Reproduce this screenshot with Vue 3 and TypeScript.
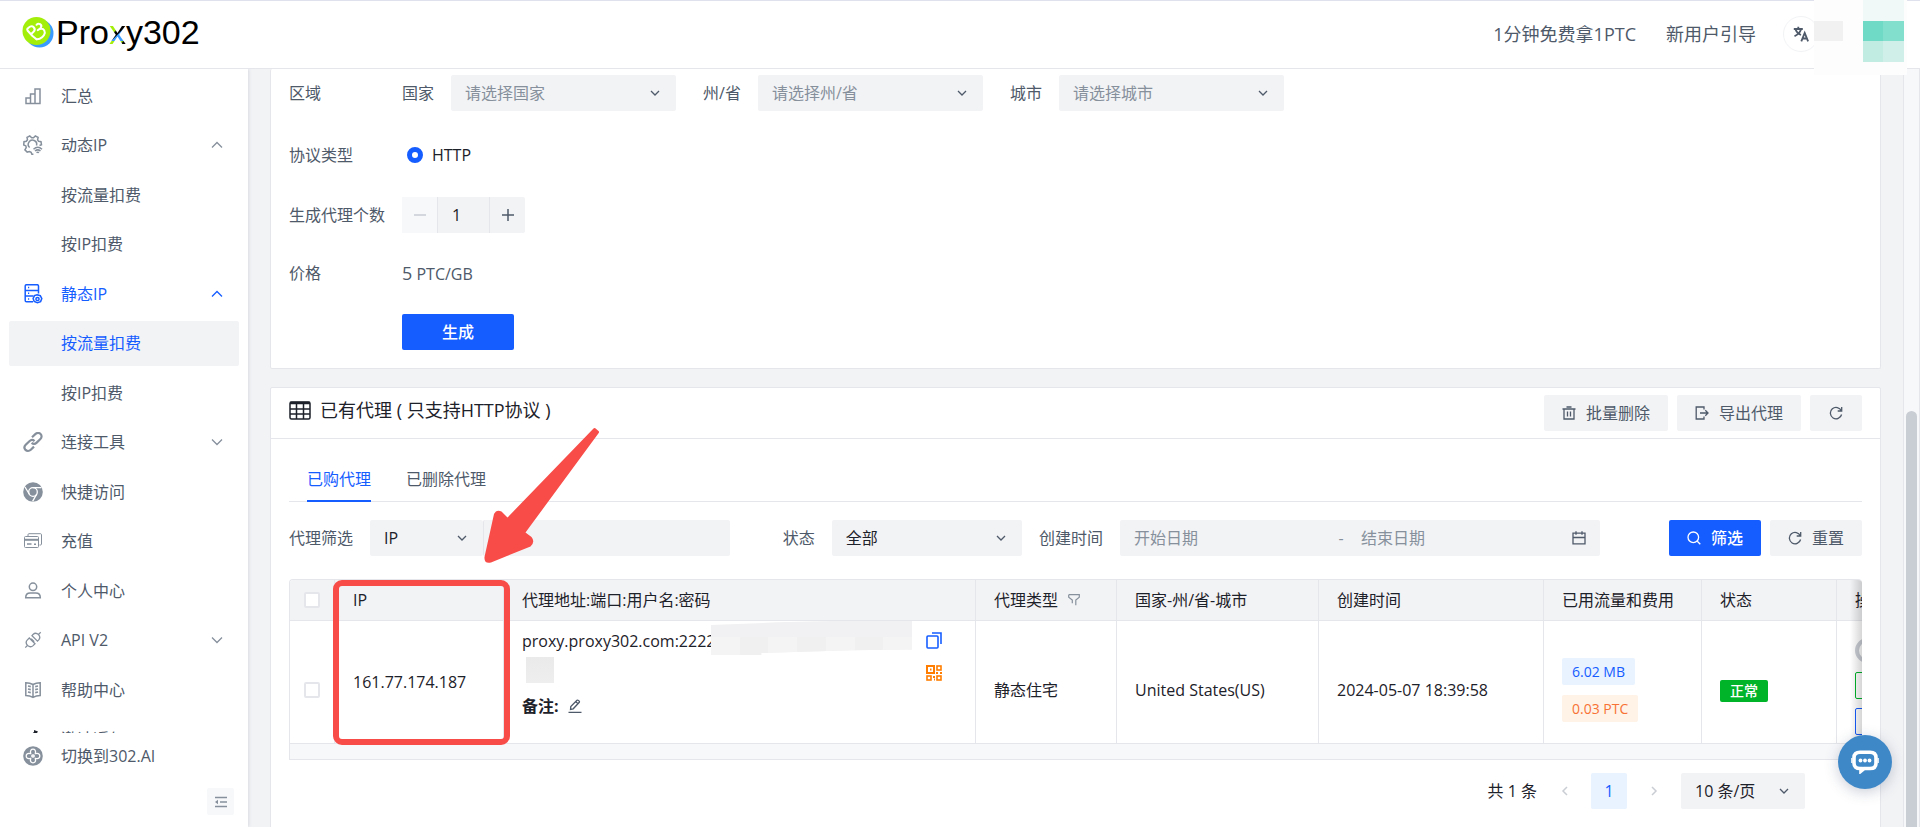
<script setup lang="ts">
import { ref } from 'vue'

interface MenuItem {
  label: string
  icon?: string
  open?: boolean
  arrow?: boolean
  state?: 'parent' | 'active'
}

const icons: Record<string, string> = {
  chart: '<path d="M3 17.5V12h4.5v5.5M7.500 17.500V8H12v9.500M12 17.500V3h5v14.500M2.300 17.500h15.400"/>',
  gearWifi:
    '<path d="M16.500 10.500l2-.8-.5-3-2.400-.4-1-1.500.5-2.400-2.800-1.400L10.500 2.700H8.700L6.800 1 4 2.400l.5 2.300-1.200 1.600-2.300.4-.3 3.200 2.200 1 .3 1.800-1.300 2.100 2.300 2.300 2.300-.6 1.600.8.8 2h1.500"/><path d="M6.700 12.500a4.200 4.200 0 1 1 6.800-2"/><path d="M10.500 14.300c2.600-2.400 5.900-2.400 8.500 0M12 16c1.800-1.500 3.700-1.500 5.500 0M13.500 17.700c.8-.6 1.700-.6 2.500 0"/>',
  server:
    '<path d="M10 17.800H3.500c-.8 0-1.300-.5-1.300-1.300V2c0-.8.5-1.300 1.300-1.300h10.700c.8 0 1.300.5 1.300 1.300v7.500M2.200 6.400h13.300M2.200 12h8.300M5 3.600h1.200M5 9.200h1.200M5 15h1.200"/><path d="M14 10.800l3.300.9 1.500 2.900-1.200 3-3.200 1.200-3.200-1.300-1.100-3 1.400-2.900z"/><circle cx="14.500" cy="15" r="1.600"/>',
  link: '<g stroke-width="2.200"><path d="M9 5.200l3.300-3.100c1.700-1.600 4-1.500 5.300-.1 1.300 1.300 1.300 3.500-.2 5l-3.700 3.600c-1.500 1.500-3.700 1.400-5.100.2"/><path d="M11 14.600l-3.200 3.100c-1.700 1.600-4 1.500-5.300.2-1.300-1.400-1.300-3.600.2-5.100l3.700-3.600c1.500-1.400 3.700-1.400 5.100-.1"/></g>',
  chrome:
    '<circle cx="10" cy="10" r="9.800" fill="currentColor" stroke="none"/><circle cx="10" cy="10" r="4.300" stroke="#fff" stroke-width="1.300"/><g stroke="#fff" stroke-width="1.300"><path d="M10 5.700h8.500M6.200 12L2 5M13.700 12.200L9.600 19.300"/></g>',
  card: '<path d="M5 5V3.700c0-.6.400-1 1-1h11.500c.6 0 1 .4 1 1V13c0 .6-.4 1-1 1h-1" stroke-width="1"/><rect x="1.500" y="5.500" width="14" height="11" rx="1" stroke-width="1"/><path d="M1.500 8.800h14" stroke-width="2"/><path d="M4 13h4.500M11 13.300h2" stroke-width="1.400"/>',
  user: '<circle cx="10" cy="5.800" r="3.700"/><path d="M2.700 16.800c0-3 1.600-4.700 4.500-4.700h5.600c2.900 0 4.500 1.700 4.500 4.700z"/>',
  plug: '<path d="M2.300 17.600l2.300-2.300M17.700 2.300l-2.300 2.300M8.200 8.800l3 3M4.500 15.400c-1.700-1.900-1.700-3.900-.1-5.500l1.900-1.900 5.700 5.700-1.900 1.900c-1.700 1.600-4 1.500-5.600-.2zM15.500 4.600c-1.800-1.600-3.800-1.700-5.500-.1L9 5.700l5.500 5.400 1-1c1.600-1.700 1.600-3.800 0-5.500z" stroke-width="1.300"/>',
  book: '<path d="M10 4.500C7.600 3 5.200 2.700 2.800 2.700v12.800c2.600 0 4.900.5 7.200 1.800 2.300-1.300 4.600-1.800 7.200-1.800V2.700c-2.400 0-4.800.3-7.200 1.800zM10 4.500v12.800"/><path d="M5 6l2.800.6M5 9l2.800.6M5 12l2.800.6M15 6l-2.800.6M15 9l-2.800.6M15 12l-2.800.6" stroke-width="1.600"/>',
  flame:
    '<path d="M11 1l4 1.500-1 1.500 2 2-1 3h-5c-1-3-1-5 1-6z" fill="#1d2129" stroke="none"/>',
  switch:
    '<circle cx="10" cy="10" r="9.800" fill="currentColor" stroke="none"/><path d="M7.700 7.700c-3.700-1-4.500.9-4.500 2.300s.8 3.300 4.500 2.300c-1 3.700.9 4.500 2.300 4.500s3.300-.8 2.300-4.500c3.700 1 4.500-.9 4.500-2.300s-.8-3.300-4.500-2.300c1-3.700-.9-4.500-2.300-4.500s-3.300.8-2.300 4.500zM10 8v4M8 10h4" stroke="#fff" stroke-width="1.300"/>',
}

const menu: MenuItem[] = [
  { label: '汇总', icon: 'chart' },
  { label: '动态IP', icon: 'gearWifi', arrow: true, open: true },
  { label: '按流量扣费' },
  { label: '按IP扣费' },
  { label: '静态IP', icon: 'server', arrow: true, open: true, state: 'parent' },
  { label: '按流量扣费', state: 'active' },
  { label: '按IP扣费' },
  { label: '连接工具', icon: 'link', arrow: true },
  { label: '快捷访问', icon: 'chrome' },
  { label: '充值', icon: 'card' },
  { label: '个人中心', icon: 'user' },
  { label: 'API V2', icon: 'plug', arrow: true },
  { label: '帮助中心', icon: 'book' },
  { label: '邀请返佣', icon: 'flame' },
]

const regions = [
  { id: 'country', label: '国家', hint: '请选择国家' },
  { id: 'state', label: '州/省', hint: '请选择州/省' },
  { id: 'city', label: '城市', hint: '请选择城市' },
]

const quantity = ref('1')
const protocol = ref('HTTP')
</script>

<template>
  <div class="app">
    <header class="topbar">
      <a class="logo" href="#" aria-label="Proxy302">
        <svg class="logo-mark" width="32" height="32" viewBox="0 0 32 32">
          <circle cx="17.500" cy="17.500" r="14" fill="#3a9bff" />
          <circle cx="14.500" cy="15" r="14" fill="#a4ee0c" />
          <g fill="none" stroke="#fff" stroke-width="2" stroke-linecap="round" stroke-linejoin="round">
            <path d="M10.500 20L5.500 14.500c-.8-1 0-2 1-2.800 1.500-1.300 3.700-2 5.200-.5 1.500 1.500 1 3.500-.4 4.900L9.500 17.800M10.500 20l4 3.200" />
            <path d="M14.500 8.800c2-2.300 6.200-.3 4.300 3-.7 1.100-1.900 1.900-3.100 2.400 2.300-1.600 5.300-2 6.600.2 1.700 3-1.200 7-4.700 8.300-1.200.4-2.300.4-3.100.5" />
          </g>
        </svg>
        <span class="logo-text">Pro<span class="logo-x">x</span>y302</span>
      </a>
      <nav class="toplinks">
        <a href="#">1分钟免费拿1PTC</a>
        <a href="#">新用户引导</a>
        <button class="lang" type="button" aria-label="语言">
          <svg width="16" height="16" viewBox="0 0 16 16" fill="none" stroke="currentColor" stroke-width="1.800">
            <path d="M.8 3h9M5.300.8V3M2.500 3.500c1 2.500 3 4.500 5.500 5.500M8 3.500C7 6.500 4.500 8.800 1.500 10.300" />
            <path d="M8.300 15.300l3.400-8.500 3.400 8.500M9.400 12.500h4.600" />
          </svg>
        </button>
      </nav>
      <div class="mask-account" aria-hidden="true">
        <i class="cell-gray"></i><i class="cell-pale"></i><i class="cell-teal"></i><i class="cell-mint"></i>
      </div>
    </header>

    <aside class="sidebar">
      <ul class="menu">
        <li v-for="(item, i) in menu" :key="i">
          <a href="#" class="menu-item" :class="item.state">
            <svg
              v-if="item.icon"
              class="menu-icon"
              width="20"
              height="20"
              viewBox="0 0 20 20"
              fill="none"
              stroke="currentColor"
              stroke-width="1.500"
              v-html="icons[item.icon]"
            ></svg>
            <span class="menu-label">{{ item.label }}</span>
            <svg v-if="item.arrow" class="menu-arrow" width="12" height="8" viewBox="0 0 12 8" fill="none" stroke="currentColor" stroke-width="1.300">
              <path :d="item.open ? 'M1 6.500L6 1.500L11 6.500' : 'M1 1.500L6 6.500L11 1.500'" />
            </svg>
          </a>
        </li>
      </ul>
      <a href="#" class="menu-item bottom-item">
        <svg class="menu-icon" width="20" height="20" viewBox="0 0 20 20" fill="none" v-html="icons.switch"></svg>
        <span class="menu-label">切换到302.AI</span>
      </a>
      <button class="collapse" type="button" aria-label="收起菜单">
        <svg width="14" height="12" viewBox="0 0 14 12" fill="none" stroke="currentColor" stroke-width="1.300">
          <path d="M1 1.500h12M6 6h7M1 10.500h12" /><path d="M4 3.800v4.400L1 6z" fill="currentColor" stroke="none" />
        </svg>
      </button>
    </aside>

    <main class="content">
      <section class="card form-card">
        <div class="form-row row-region">
          <span class="form-label">区域</span>
          <div class="regions">
            <div v-for="r in regions" :key="r.id" class="region">
              <label :for="r.id">{{ r.label }}</label>
              <div class="select region-select">
                <select :id="r.id" class="hint"><option>{{ r.hint }}</option></select>
                <svg width="10" height="7" viewBox="0 0 10 7"><path d="M1 1l4 4 4-4" /></svg>
              </div>
            </div>
          </div>
        </div>
        <div class="form-row row-protocol">
          <span class="form-label">协议类型</span>
          <label class="radio"><input v-model="protocol" type="radio" name="protocol" value="HTTP" /><span>HTTP</span></label>
        </div>
        <div class="form-row row-count">
          <label class="form-label" for="qty">生成代理个数</label>
          <div class="stepper">
            <button type="button" disabled aria-label="减少"><svg width="14" height="14" viewBox="0 0 14 14"><path d="M1 7h12" /></svg></button>
            <input id="qty" v-model="quantity" type="text" />
            <button type="button" aria-label="增加"><svg width="14" height="14" viewBox="0 0 14 14"><path d="M1 7h12M7 1v12" /></svg></button>
          </div>
        </div>
        <div class="form-row row-price">
          <span class="form-label">价格</span>
          <span class="price"><b>5</b> PTC/GB</span>
        </div>
        <div class="form-row row-submit">
          <span class="form-label"></span>
          <button class="primary generate" type="button">生成</button>
        </div>
      </section>

      <section class="card list-card">
        <div class="card-head">
          <svg width="22" height="19" viewBox="0 0 22 19" fill="none" stroke="#1d2129" stroke-width="1.500">
            <rect x="1" y="1" width="20" height="17" rx="1.500" /><path d="M1 2h20" stroke-width="2.500" /><path d="M1 8h20M1 13h20M7.500 1v17M14.500 1v17" />
          </svg>
          <h2>已有代理 ( 只支持HTTP协议 )</h2>
          <div class="head-actions">
            <button class="soft" type="button">
              <svg class="ico" viewBox="0 0 14 14"><path d="M.5 3h13M2 3v10h10V3M4.500 1h5M5.500 5.500v5M8.500 5.500v5" /></svg>批量删除
            </button>
            <button class="soft" type="button">
              <svg class="ico" viewBox="0 0 14 14"><path d="M9 3.500V1H1.200v12H9v-2.500M5 7h8M10.300 4.300L13 7l-2.700 2.700" /></svg>导出代理
            </button>
            <button class="soft only-icon" type="button" aria-label="刷新">
              <svg class="ico" viewBox="0 0 14 14"><path d="M12.300 4.800A5.700 5.700 0 1 0 12.600 8.500M12.700 1v4H8.700" /></svg>
            </button>
          </div>
        </div>

        <div class="tabs" role="tablist">
          <button class="tab on" type="button" role="tab" aria-selected="true">已购代理</button>
          <button class="tab" type="button" role="tab" aria-selected="false">已删除代理</button>
        </div>

        <div class="filters">
          <label for="kind">代理筛选</label>
          <div class="combo">
            <div class="select">
              <select id="kind"><option>IP</option></select>
              <svg width="10" height="7" viewBox="0 0 10 7"><path d="M1 1l4 4 4-4" /></svg>
            </div>
            <input type="text" aria-label="代理筛选内容" />
          </div>
          <label for="status" class="status-label">状态</label>
          <div class="select status-select">
            <select id="status"><option>全部</option></select>
            <svg width="10" height="7" viewBox="0 0 10 7"><path d="M1 1l4 4 4-4" /></svg>
          </div>
          <label for="start">创建时间</label>
          <div class="range">
            <input id="start" type="text" placeholder="开始日期" />
            <span>-</span>
            <input type="text" placeholder="结束日期" aria-label="结束日期" class="range-end" />
            <svg class="ico" viewBox="0 0 14 14"><path d="M1 2.200h12v10.600H1zM1 6.500h12M4 .3v3.400M10 .3v3.400" /></svg>
          </div>
          <div class="filter-actions">
            <button class="primary" type="button">
              <svg class="ico" viewBox="0 0 14 14"><circle cx="6.300" cy="6.300" r="5.300" /><path d="M10.300 10.300L13.300 13.300" /></svg>筛选
            </button>
            <button class="soft" type="button">
              <svg class="ico" viewBox="0 0 14 14"><path d="M12.300 4.800A5.700 5.700 0 1 0 12.600 8.500M12.700 1v4H8.700" /></svg>重置
            </button>
          </div>
        </div>

        <div class="table-zone">
          <div class="table-wrap">
            <table>
              <colgroup>
                <col class="c-check" /><col class="c-ip" /><col /><col class="c-type" /><col class="c-region" /><col class="c-time" /><col class="c-usage" /><col class="c-status" /><col class="c-ops" />
              </colgroup>
              <thead>
                <tr>
                  <th class="check"><input type="checkbox" aria-label="全选" /></th>
                  <th>IP</th>
                  <th>代理地址:端口:用户名:密码</th>
                  <th>
                    <span class="th-filter">代理类型
                      <svg width="12" height="12" viewBox="0 0 12 12" fill="none" stroke="#86909c" stroke-width="1.200"><path d="M.7.700h10.600v2.600L7.800 6v5.300M.7.700v2.600L4.300 6v3.300" /></svg>
                    </span>
                  </th>
                  <th>国家-州/省-城市</th>
                  <th>创建时间</th>
                  <th>已用流量和费用</th>
                  <th>状态</th>
                  <th>操作</th>
                </tr>
              </thead>
              <tbody>
                <tr>
                  <td class="check"><input type="checkbox" aria-label="选择 161.77.174.187" /></td>
                  <td class="ip">161.77.174.187</td>
                  <td class="addr-cell">
                    <div class="addr">
                      <div class="addr-text">
                        <div>proxy.proxy302.com:2222</div>
                        <div class="note">
                          <strong>备注:</strong>
                          <button type="button" aria-label="编辑备注">
                            <svg class="ico" viewBox="0 0 14 14"><path d="M.5 13.300h13M2.500 10.500l.3-3L9 1.300c.8-.8 3 1 2.300 2L5.200 9.800zM7.800 2.800l2.300 2" /></svg>
                          </button>
                        </div>
                      </div>
                      <div class="addr-tools">
                        <button type="button" aria-label="复制">
                          <svg width="16" height="17" viewBox="0 0 16 17" fill="none" stroke="#165dff" stroke-width="1.600"><rect x="1" y="4" width="11" height="12" rx="1" /><path d="M6 1h9v11" /></svg>
                        </button>
                        <button type="button" aria-label="二维码">
                          <svg width="16" height="16" viewBox="0 0 16 16" fill="none" stroke="#ff7d00" stroke-width="2">
                            <rect x="1" y="1" width="7" height="7" /><path d="M4 4.500h1.500" /><rect x="11" y="1" width="4" height="4" stroke-width="1.600" /><rect x="1" y="11" width="4" height="4" stroke-width="1.600" /><rect x="11" y="11" width="4" height="4" stroke-width="1.600" /><path d="M7 12h2M8 14.500h1M10 8h2M14 8h2" />
                          </svg>
                        </button>
                      </div>
                    </div>
                    <div class="mask-credential" aria-hidden="true"><i></i><i></i><i></i><i></i><i></i><i></i><i></i></div>
                    <div class="mask-tail" aria-hidden="true"></div>
                  </td>
                  <td>静态住宅</td>
                  <td>United States(US)</td>
                  <td>2024-05-07 18:39:58</td>
                  <td>
                    <div class="usage"><span class="tag blue">6.02 MB</span><span class="tag orange">0.03 PTC</span></div>
                  </td>
                  <td><span class="badge">正常</span></td>
                  <td class="ops-cell">
                    <div class="ops">
                      <button class="toggle" type="button" role="switch" aria-checked="false" aria-label="启用"></button>
                      <button class="op green" type="button" aria-label="续费"></button>
                      <button class="op indigo" type="button" aria-label="详情"></button>
                    </div>
                  </td>
                </tr>
              </tbody>
            </table>
            <div class="track"></div>
          </div>
          <div class="highlight" aria-hidden="true"></div>
          <svg class="pointer" width="120" height="140" viewBox="0 0 120 140" aria-hidden="true">
            <path d="M109.500 3.500Q110.300 2.500 111.300 3.300L114.500 6Q115.500 7 114.700 8L41.500 107.500L47.500 112Q51.500 117 46.500 121.500L7 137.500Q0 139 .5 132L10 89Q12.500 84 17.500 86.500L23.500 92.500Z" fill="#f74c48" />
          </svg>
        </div>

        <div class="pager">
          <span class="total">共 1 条</span>
          <button type="button" aria-label="上一页" disabled><svg width="7" height="10" viewBox="0 0 7 10"><path d="M6 1L2 5l4 4" /></svg></button>
          <button type="button" class="current">1</button>
          <button type="button" aria-label="下一页" disabled><svg width="7" height="10" viewBox="0 0 7 10"><path d="M1 1l4 4-4 4" /></svg></button>
          <div class="select page-size">
            <select aria-label="每页条数"><option>10 条/页</option></select>
            <svg width="10" height="7" viewBox="0 0 10 7"><path d="M1 1l4 4 4-4" /></svg>
          </div>
        </div>
      </section>
    </main>

    <div class="scrollbar" aria-hidden="true"><div class="thumb"></div></div>

    <button class="chat" type="button" aria-label="在线客服">
      <svg width="28" height="24" viewBox="0 0 28 24" fill="none" stroke="#fff">
        <path d="M9 2.200h10c4 0 6 2 6 5.500v5.500c0 3.500-2 5.300-6 5.300h-6l-3 2.500v-2.500H9c-4 0-6-2-6-5.300V7.700c0-3.500 2-5.500 6-5.500z" stroke-width="3.600" />
        <path d="M.8 8v5M27.200 8v5" stroke-width="1.200" />
        <g fill="#fff" stroke="none"><circle cx="9.500" cy="10.500" r="1.900" /><circle cx="14" cy="10.500" r="1.900" /><circle cx="18.500" cy="10.500" r="1.900" /></g>
      </svg>
    </button>
  </div>
</template>

<style>
body {
  margin: 0;
  overflow: hidden;
}
</style>

<style scoped>
* {
  box-sizing: border-box;
}
.app {
  display: grid;
  grid-template: 69px 1fr / 248px 1fr 17px;
  height: 100vh;
  overflow: hidden;
  background: #f2f3f5;
  color: #4e5969;
  font: 16px/24px 'Open Sans', 'Noto Sans CJK SC', sans-serif;
}
a {
  color: inherit;
  text-decoration: none;
}
button,
input,
select {
  margin: 0;
  padding: 0;
  border: 0;
  border-radius: 0;
  outline: 0;
  background: none;
  color: inherit;
  font: inherit;
}
svg {
  display: block;
  flex: none;
}
.ico {
  width: 14px;
  height: 14px;
  fill: none;
  stroke: currentColor;
  stroke-width: 1.3;
}

/* top bar */
.topbar {
  position: relative;
  grid-column: 1 / -1;
  display: flex;
  align-items: center;
  justify-content: space-between;
  padding: 0 101px 2px 22px;
  border-top: 1px solid #dfe1ec;
  border-bottom: 1px solid #e5e6eb;
  background: #fff;
}
.logo {
  display: flex;
  align-items: center;
  gap: 2px;
  padding-bottom: 4px;
  color: #000;
}
.logo-text {
  font: 34px/40px 'Liberation Sans', Arial, sans-serif;
}
.logo-x {
  background: linear-gradient(135deg, #a4ee0c 38%, #000 44%, #000 56%, #3a9bff 60%) center / 100% 18px;
  background-clip: text;
  color: transparent;
}
.toplinks {
  display: flex;
  align-items: center;
  gap: 30px;
  font-size: 18px;
}
.lang {
  display: grid;
  place-items: center;
  width: 36px;
  height: 36px;
  margin-left: -3px;
  border: 1px solid #f2f3f5;
  border-radius: 50%;
}
.mask-account {
  position: absolute;
  top: -1px;
  right: 13px;
  z-index: 2;
  display: grid;
  grid-template: 21px 20px 21px 13px / 29px 20px 41px 3px;
  background: #fdfdfd;
}
.cell-gray {
  grid-area: 2 / 1;
  background: #f1f1f1;
}
.cell-pale {
  grid-area: 1 / 3;
  background: #f0f8f8;
}
.cell-teal {
  grid-area: 2 / 3;
  background: linear-gradient(90deg, #6fdac5 50%, #82dfcd 50%);
}
.cell-mint {
  grid-area: 3 / 3;
  background: linear-gradient(90deg, #c0ece2 50%, #cfefe8 50%);
}

/* sidebar */
.sidebar {
  display: flex;
  flex-direction: column;
  min-height: 0;
  padding: 5px 9px 12px;
  background: #fff;
  box-shadow: 1px 0 3px #d8dbe2;
}
.menu {
  flex: 1;
  margin: 0;
  padding: 0;
  overflow: hidden;
  list-style: none;
}
.menu li {
  margin-bottom: 4px;
}
.menu li:nth-child(even) {
  margin-bottom: 5px;
}
.menu-item {
  display: flex;
  align-items: center;
  height: 45px;
  padding: 0 16px 2px 52px;
  border-radius: 2px;
}
.menu-icon {
  width: 20px;
  margin-left: -38px;
  margin-right: 18px;
  color: #86909c;
}
.menu-label {
  flex: 1;
}
.menu-arrow {
  color: #86909c;
}
.parent,
.parent svg,
.active {
  color: #165dff;
}
.active {
  background: #f2f3f5;
}
.bottom-item {
  height: 46px;
  padding-bottom: 0;
}
.collapse {
  display: grid;
  place-items: center;
  align-self: flex-end;
  width: 27px;
  height: 27px;
  margin: 9px 5px 0 0;
  border-radius: 2px;
  background: #f7f8fa;
  color: #86909c;
}

/* content */
.content {
  display: flex;
  flex-direction: column;
  gap: 18px;
  min-width: 0;
  min-height: 0;
  padding: 0 22px;
  overflow: hidden;
}
.card {
  flex: none;
  border: 1px solid #e5e6eb;
  border-radius: 2px;
  background: #fff;
}
.form-card {
  padding: 6px 18px 18px;
  border-top: 0;
}
.form-row {
  display: flex;
  align-items: center;
  height: 36px;
}
.row-protocol {
  margin-top: 26px;
}
.row-count {
  margin-top: 24px;
}
.row-price {
  margin-top: 22px;
}
.row-submit {
  margin-top: 23px;
}
.form-label {
  width: 113px;
}
.regions,
.region {
  display: flex;
  align-items: center;
}
.regions {
  gap: 27px;
}
.region {
  gap: 17px;
}
.region-select {
  width: 225px;
}
.select {
  position: relative;
  display: flex;
  align-items: center;
  height: 36px;
  border-radius: 2px;
  background: #f2f3f5;
  color: #1d2129;
}
.select select {
  width: 100%;
  height: 36px;
  padding: 0 36px 0 14px;
  appearance: none;
}
.select .hint {
  color: #86909c;
}
.select svg {
  position: absolute;
  right: 16px;
  fill: none;
  stroke: #4e5969;
  stroke-width: 1.3;
  pointer-events: none;
}
.radio {
  display: flex;
  align-items: center;
  gap: 9px;
  padding-left: 5px;
  color: #1d2129;
}
.radio input {
  width: 16px;
  height: 16px;
  border: 5px solid #165dff;
  border-radius: 50%;
  background: #fff;
  appearance: none;
}
.stepper {
  display: flex;
  border-radius: 2px;
  background: #f2f3f5;
}
.stepper button {
  display: grid;
  place-items: center;
  width: 35px;
  height: 36px;
}
.stepper button:disabled {
  background: #f7f8fa;
  color: #c9cdd4;
}
.stepper svg {
  stroke: currentColor;
  stroke-width: 1.5;
}
.stepper input {
  width: 53px;
  height: 36px;
  padding-left: 14px;
  border: solid #e5e6eb;
  border-width: 0 1px;
  color: #1d2129;
}
.price b {
  font-size: 18px;
  font-weight: 400;
}
.primary,
.soft {
  display: flex;
  align-items: center;
  justify-content: center;
  gap: 10px;
  height: 36px;
  padding: 0 18px;
  border-radius: 2px;
  white-space: nowrap;
}
.primary {
  background: #165dff;
  color: #fff;
  font-weight: 500;
}
.soft {
  background: #f2f3f5;
}
.generate {
  width: 112px;
}

.list-card {
  padding-bottom: 60px;
}
.card-head {
  display: flex;
  align-items: center;
  gap: 9px;
  height: 51px;
  padding: 0 18px;
  border-bottom: 1px solid #e5e6eb;
  color: #1d2129;
}
.card-head > svg {
  margin-bottom: 6px;
}
h2 {
  flex: 1;
  margin: 0 0 6px;
  font-size: 18px;
  font-weight: 400;
}
.head-actions {
  display: flex;
  gap: 9px;
  color: #4e5969;
}
.only-icon {
  width: 52px;
}
.tabs {
  display: flex;
  gap: 35px;
  margin: 18px 18px 0;
  padding: 0 18px;
  border-bottom: 1px solid #e5e6eb;
}
.tab {
  height: 45px;
  margin-bottom: -1px;
  border-bottom: 2px solid transparent;
}
.tab.on {
  border-color: #165dff;
  color: #165dff;
}
.filters {
  display: flex;
  align-items: center;
  gap: 17px;
  margin: 18px 18px 23px;
}
.filters label {
  flex: none;
}
.combo {
  display: flex;
  flex: 359 1 0;
}
.combo .select {
  width: 113px;
}
.combo input {
  flex: 1;
  min-width: 0;
  height: 36px;
  padding: 0 14px;
  border-left: 1px solid #e5e6eb;
  border-radius: 2px;
  background: #f2f3f5;
}
.status-label {
  margin-left: 36px;
}
.status-select {
  flex: 190 1 0;
}
.range {
  display: flex;
  flex: 451 1 28px;
  align-items: center;
  min-width: 0;
  height: 36px;
  padding: 0 14px;
  border-radius: 2px;
  background: #f2f3f5;
  color: #86909c;
}
.range input {
  flex: 1;
  min-width: 0;
}
.range span {
  width: 16px;
  text-align: center;
}
.range .range-end {
  padding-left: 12px;
}
.range .ico {
  margin-left: 12px;
  color: #4e5969;
}
.range ::placeholder {
  color: #86909c;
  opacity: 1;
}
.filter-actions {
  display: flex;
  gap: 9px;
  margin-left: 52px;
}

/* table */
.table-zone {
  position: relative;
  margin: 0 18px;
}
.table-wrap {
  position: relative;
  overflow: hidden;
  border: 1px solid #e5e6eb;
  border-right: 0;
  border-radius: 4px 4px 0 0;
}
.table-wrap::after {
  content: '';
  position: absolute;
  top: 0;
  right: 0;
  bottom: 16px;
  width: 12px;
  background: linear-gradient(90deg, transparent, rgba(0, 0, 0, 0.16));
}
table {
  width: calc(100% + 155px);
  table-layout: fixed;
  border-spacing: 0;
  color: #1d2129;
}
.c-check { width: 45px; }
.c-ip { width: 169px; }
.c-type { width: 141px; }
.c-region { width: 202px; }
.c-time { width: 225px; }
.c-usage { width: 158px; }
.c-status { width: 135px; }
.c-ops { width: 180px; }
th,
td {
  padding: 0 0 0 18px;
  border-right: 1px solid #e5e6eb;
  border-bottom: 1px solid #e5e6eb;
  text-align: left;
  font-weight: 400;
  white-space: nowrap;
}
th {
  height: 41px;
  background: #f2f3f5;
}
td {
  height: 123px;
  padding-top: 16px;
}
td.ip {
  padding-top: 0;
}
.ops-cell {
  padding-top: 9px;
}
.check {
  padding-left: 14px;
}
.check input {
  display: block;
  width: 16px;
  height: 16px;
  border: 2px solid #e5e6eb;
  border-radius: 2px;
  background: #fff;
  appearance: none;
}
.th-filter {
  display: flex;
  align-items: center;
  gap: 10px;
}
.addr-cell {
  position: relative;
  padding-top: 0;
}
.addr {
  display: flex;
  justify-content: space-between;
  height: 106px;
  padding-right: 33px;
}
.addr-text {
  display: flex;
  flex-direction: column;
  justify-content: space-between;
}
.note {
  display: flex;
  align-items: center;
  gap: 9px;
  padding-bottom: 17px;
}
.note button {
  color: #4e5969;
}
.addr-tools {
  display: flex;
  flex-direction: column;
  gap: 16px;
  padding-top: 3px;
}
.mask-credential {
  position: absolute;
  top: 0;
  left: 207px;
  display: flex;
  width: 201px;
  height: 34px;
  background: #f1f1f3;
  clip-path: polygon(0 12%, 33% 4%, 60% 0, 100% 0, 100% 84%, 70% 86%, 25% 94%, 25% 100%, 0 100%);
}
.mask-credential i {
  flex: 1;
  margin-top: 16px;
  background: #f4f4f4;
}
.mask-credential i:nth-child(even) {
  background: #f0f0f0;
}
.mask-tail {
  position: absolute;
  top: 36px;
  left: 22px;
  width: 28px;
  height: 26px;
  background: linear-gradient(180deg, #eaeaea, #eee);
}
.usage {
  display: flex;
  flex-direction: column;
  align-items: flex-start;
  gap: 10px;
}
.tag {
  height: 27px;
  padding: 0 10px;
  border-radius: 2px;
  font-size: 14px;
  line-height: 27px;
}
.blue {
  background: #e8f3ff;
  color: #165dff;
}
.orange {
  background: #fff3e8;
  color: #f77234;
}
.badge {
  display: inline-block;
  height: 22px;
  padding: 0 10px;
  border-radius: 2px;
  background: #00b42a;
  color: #fff;
  font-size: 14px;
  font-weight: 500;
  line-height: 22px;
  vertical-align: middle;
}
.ops {
  display: flex;
  flex-direction: column;
  gap: 9px;
}
.toggle {
  width: 45px;
  height: 25px;
  border: 4px solid #c9cdd4;
  border-radius: 13px;
}
.op {
  width: 60px;
  height: 27px;
  border: 1px solid;
  border-radius: 2px;
}
.green {
  color: #00b42a;
}
.indigo {
  color: #165dff;
}
.track {
  height: 15px;
  background: #f7f8fa;
}
.highlight {
  position: absolute;
  top: 1px;
  left: 44px;
  width: 177px;
  height: 165px;
  border: 6px solid #f74c48;
  border-radius: 9px;
}
.pointer {
  position: absolute;
  bottom: 195px;
  left: 195px;
}

.pager {
  display: flex;
  align-items: center;
  justify-content: flex-end;
  gap: 9px;
  margin: 13px 75px 0 18px;
  color: #1d2129;
}
.pager button {
  display: grid;
  place-items: center;
  width: 36px;
  height: 36px;
  border-radius: 2px;
}
.pager button svg {
  fill: none;
  stroke: #c9cdd4;
  stroke-width: 1.5;
}
.pager .current {
  background: #e8f3ff;
  color: #165dff;
}
.page-size {
  width: 124px;
}

.scrollbar {
  padding: 342px 2px 0;
  border-left: 1px solid #e5e6eb;
  border-right: 1px solid #e5e6eb;
  background: #f7f8fa;
}
.thumb {
  height: 100%;
  border-radius: 6px 6px 0 0;
  background: #c9cdd4;
}
.chat {
  position: fixed;
  right: 28px;
  bottom: 38px;
  display: grid;
  place-items: center;
  width: 54px;
  height: 54px;
  border-radius: 50%;
  background: #3f88c8;
  box-shadow: 0 3px 14px rgba(40, 60, 100, 0.25);
}
</style>
